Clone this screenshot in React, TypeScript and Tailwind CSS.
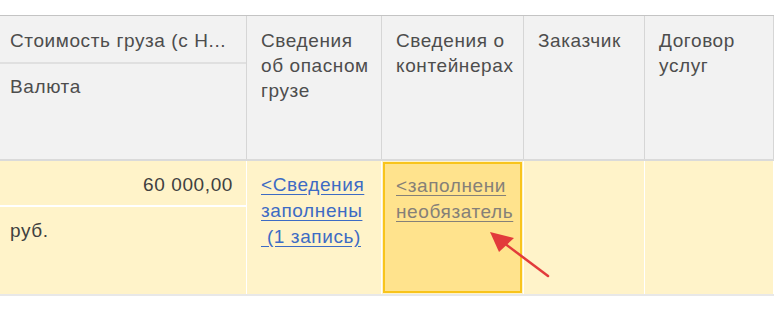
const cols = [
  { title: ["Стоимость груза (с Н..."], sub: "Валюта" },
  { title: ["Сведения", "об опасном", "грузе"] },
  { title: ["Сведения о", "контейнерах"] },
  { title: ["Заказчик"] },
  { title: ["Договор", "услуг"] },
];

function Arrow() {
  return (
    <svg
      className="absolute left-0 top-0 pointer-events-none"
      width="775"
      height="316"
      viewBox="0 0 775 316"
    >
      <line x1="548" y1="276" x2="496" y2="237" stroke="#e23b3b" strokeWidth="2.5" strokeLinecap="round" />
      <path d="M490 232 L514 238 L499 252 Z" fill="#e23b3b" />
    </svg>
  );
}

export default function App() {
  return (
    <div className="relative w-[775px] h-[316px] bg-white font-['Liberation_Sans',Arial,sans-serif] text-[19px] tracking-[0.6px] leading-[25px] text-[#4d4d4d] overflow-hidden">
      <div className="h-[15px]" />
      <div className="border-t border-[#c4c4c4] w-[774px]">
        {/* header */}
        <div className="grid grid-cols-[247px_135px_142px_121px_129px] h-[145px] bg-[#f2f2f2] border-b-2 border-[#dadada]">
          <div className="flex flex-col border-r border-[#d6d6d6]">
            <div className="h-[48px] pl-[10px] pt-[12px] border-b-2 border-[#e0e0e0] whitespace-nowrap">
              {cols[0].title[0]}
            </div>
            <div className="flex-1 pl-[10px] pt-[10px]">{cols[0].sub}</div>
          </div>
          {cols.slice(1).map((c, i) => (
            <div key={i} className="border-r border-[#d6d6d6] pl-[14px] pt-[12px]">
              {c.title.map((t) => (
                <div key={t} className="whitespace-nowrap">{t}</div>
              ))}
            </div>
          ))}
        </div>

        {/* row */}
        <div className="grid grid-cols-[247px_135px_142px_121px_129px] h-[135px] bg-[#fff3c9] border-b-2 border-[#e8e8e8]">
          <div className="flex flex-col border-r border-white">
            <div className="h-[46px] pr-[13px] pt-[11px] text-right text-[#404040] border-b-2 border-white">
              60 000,00
            </div>
            <div className="flex-1 pl-[10px] pt-[11px] text-[#404040]">руб.</div>
          </div>
          <div className="border-r border-white pl-[14px] pt-[11px] leading-[26px] text-[#3d6bc4] underline underline-offset-[3px]">
            <div className="whitespace-nowrap">&lt;Сведения</div>
            <div className="whitespace-nowrap">заполнены</div>
            <div className="whitespace-pre"> (1 запись)</div>
          </div>
          <div className="border-r border-white p-[1px]">
            <div className="h-full bg-[#ffe38d] border-2 border-[#f8c41c] pl-[11px] pt-[9px] leading-[26px] text-[#858078] underline underline-offset-[3px] overflow-hidden">
              <div className="whitespace-nowrap">&lt;заполнени</div>
              <div className="whitespace-nowrap">необязатель</div>
            </div>
          </div>
          <div className="border-r border-white" />
          <div className="border-r border-white" />
        </div>
      </div>
      <Arrow />
    </div>
  );
}
